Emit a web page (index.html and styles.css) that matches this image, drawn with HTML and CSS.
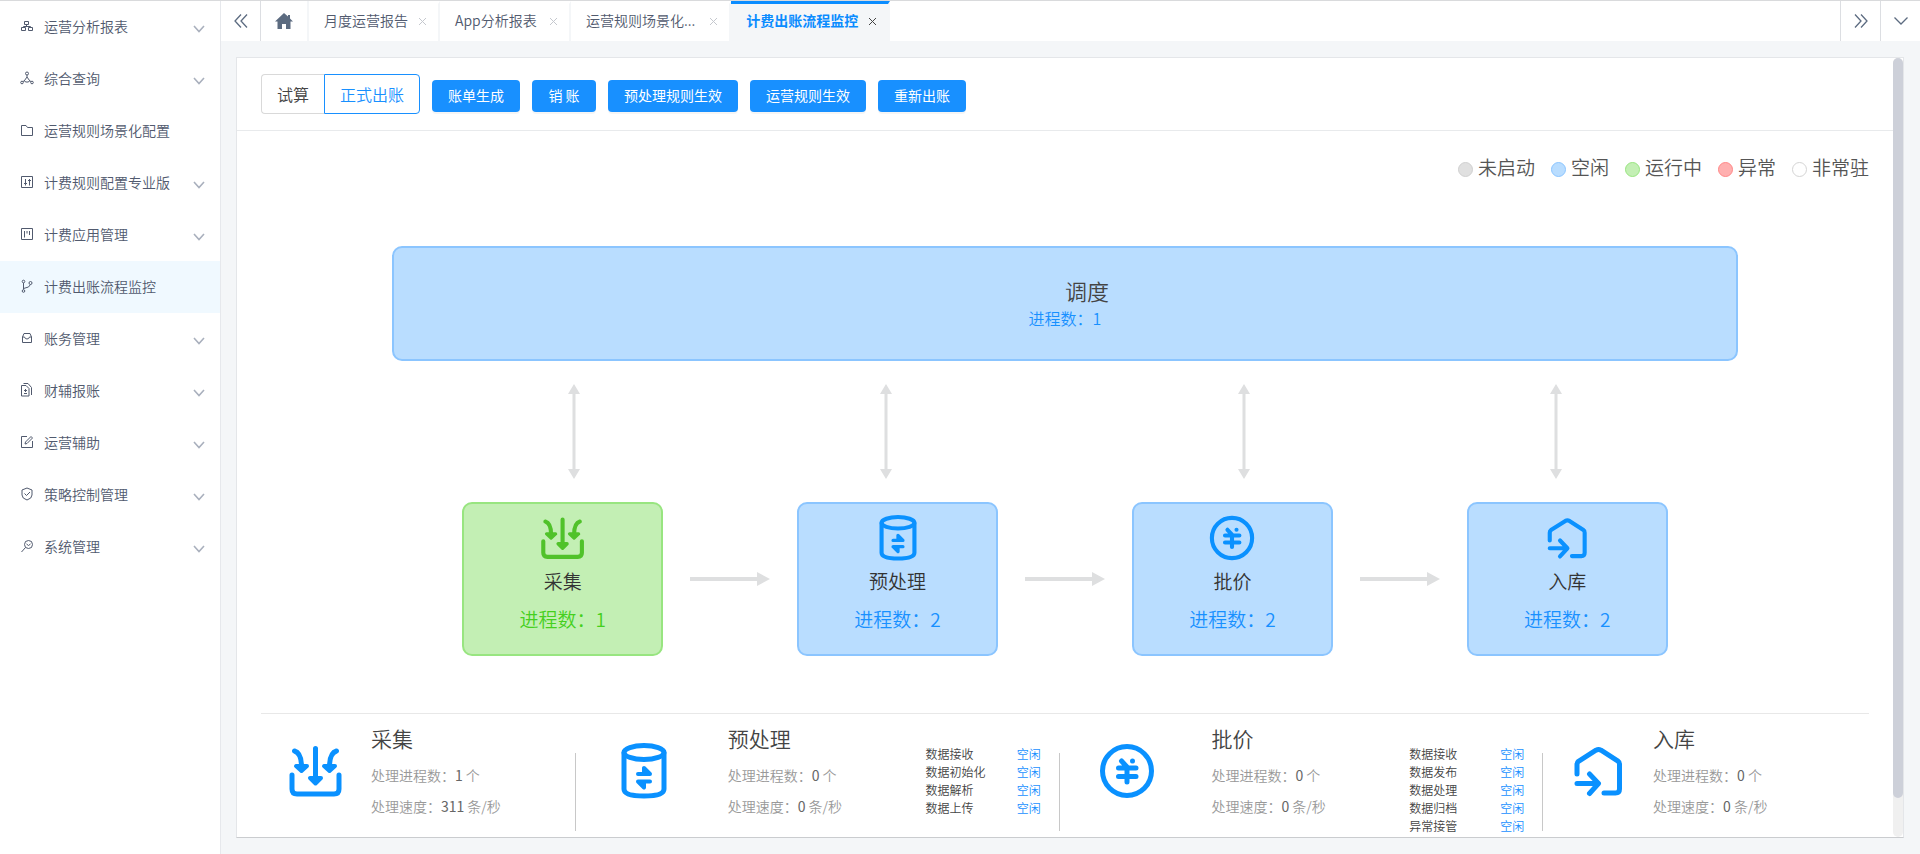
FILE: index.html
```html
<!DOCTYPE html>
<html lang="zh-CN">
<head>
<meta charset="utf-8">
<title>计费出账流程监控</title>
<link rel="stylesheet" href="styles.css">
</head>
<body>
<svg class="defs" aria-hidden="true">
  <symbol id="down" viewBox="0 0 12 8"><path stroke-width="1.6" d="M1 1l5 5.500L11 1"/></symbol>
  <symbol id="close" viewBox="0 0 9 9"><path d="M1 1l7 7M8 1L1 8"/></symbol>
  <symbol id="collect" viewBox="-1 -2 56 56">
    <path d="M3 30v14q0 5 5 5h37q5 0 5-5V30M26.500 3.500v33" class="thick"/>
    <path d="M5.500 6q7 2 7 16M47.500 6q-7 2-7 16" class="thick"/>
    <path d="M21 33h11l-5.500 5.500zM7 21h11L12.500 26zM35 21h11L40.500 26z" class="tip"/>
  </symbol>
  <symbol id="process" viewBox="0 0 46 56">
    <ellipse cx="23" cy="9.500" rx="20" ry="7" class="thick"/>
    <path d="M3 10v36q0 7 20 7t20-7V10" class="thick"/>
    <path d="M17 31h12l-6-6v6M29 38.500H17l6 6v-6" class="tip"/>
  </symbol>
  <symbol id="price" viewBox="-1 -1 56 56">
    <circle cx="27" cy="27" r="24.500" class="thick"/>
    <path d="M18.500 24H36M18.500 32.500H36M27 23v15M21.500 17L27 23M32.500 17v0" class="thick"/>
  </symbol>
  <symbol id="store" viewBox="-4 -4 56 56">
    <path d="M3 27V17.500q0-2 1.500-3.200L22 3.200q2.500-1.200 5 0l17 11q1.500 1 1.500 3.300V42q0 4-4 4H30M3 36.500h20M15.500 27l9 9.500-9 10" class="thick"/>
  </symbol>
  <symbol id="varrow" viewBox="0 0 12 95"><path d="M6 0l6 10H7.500v75H12L6 95 0 85h4.500V10H0z"/></symbol>
  <symbol id="harrow" viewBox="0 0 80 14"><path d="M0 5h67V0l13 7-13 7V9H0z"/></symbol>
</svg>
<div class="app">
  <nav class="sidebar">
    <a class="item" href="#"><svg class="ico" viewBox="0 0 14 14"><path d="M4.500 2.500h4v3h-4zM1.500 8.500h4v3h-4zM8.500 8.500h4v3h-4zM6.500 5.500v1.500M3.500 8.500v-1h7v1"/></svg><span>运营分析报表</span><svg class="chev"><use href="#down"/></svg></a>
    <a class="item" href="#"><svg class="ico" viewBox="0 0 14 14"><circle cx="7" cy="2.500" r="1.500"/><circle cx="2" cy="11.500" r="1.300"/><circle cx="12" cy="11.500" r="1.300"/><path d="M7 4v2M3 10.500l2-1M11 10.500l-2-1M7 6l2.500 3.500-1 1.500h-3l-1-1.500z"/></svg><span>综合查询</span><svg class="chev"><use href="#down"/></svg></a>
    <a class="item" href="#"><svg class="ico" viewBox="0 0 14 14"><path d="M1.500 2.500h4.500l1.500 2h5v8h-11z"/></svg><span>运营规则场景化配置</span></a>
    <a class="item" href="#"><svg class="ico" viewBox="0 0 14 14"><path d="M1.500 1.500h11v11h-11zM5.500 4v6.500M9.500 4v6.500M4 8.500h3M8 5.500h3"/></svg><span>计费规则配置专业版</span><svg class="chev"><use href="#down"/></svg></a>
    <a class="item" href="#"><svg class="ico" viewBox="0 0 14 14"><path d="M1.500 1.500h11v11h-11zM4.500 4v6.500M7 4v2.500M9.500 4v4"/></svg><span>计费应用管理</span><svg class="chev"><use href="#down"/></svg></a>
    <a class="item active" href="#"><svg class="ico" viewBox="0 0 14 14"><circle cx="3.500" cy="2.500" r="1.300"/><circle cx="3.500" cy="12" r="1.300"/><circle cx="10.500" cy="4" r="1.500"/><path d="M3.500 4v6.500M3.500 9.500q6.500-1 7-4"/></svg><span>计费出账流程监控</span></a>
    <a class="item" href="#"><svg class="ico" viewBox="0 0 14 14"><path d="M2.500 6L4 2.500h6L11.500 6v5.500h-9zM2.500 6h2q.5 2 2.500 2t2.500-2h2"/></svg><span>账务管理</span><svg class="chev"><use href="#down"/></svg></a>
    <a class="item" href="#"><svg class="ico" viewBox="0 0 14 14"><path d="M1.500 2.500H6L9 5.500V13H1.500zM3.500.5H8l3.500 4V12M5.500 6v3M4 7.500h3M4 10.500h3"/></svg><span>财辅报账</span><svg class="chev"><use href="#down"/></svg></a>
    <a class="item" href="#"><svg class="ico" viewBox="0 0 14 14"><path d="M7 1.500H1.500v11h11V6M11 1.500l1.500 1.500L7 8.500 5 9l.5-2z"/></svg><span>运营辅助</span><svg class="chev"><use href="#down"/></svg></a>
    <a class="item" href="#"><svg class="ico" viewBox="0 0 14 14"><path d="M7 1l5 2v5q0 3.500-5 5-5-1.500-5-5V3zM4.500 6.500l2 2L10 5"/></svg><span>策略控制管理</span><svg class="chev"><use href="#down"/></svg></a>
    <a class="item" href="#"><svg class="ico" viewBox="0 0 14 14"><circle cx="8.500" cy="5.500" r="4"/><path d="M5.500 8.500L1.500 13M6.500 5l2 1.500L10.500 5"/></svg><span>系统管理</span><svg class="chev"><use href="#down"/></svg></a>
  </nav>
  <div class="body">
    <header class="tabs">
      <button class="nav-btn first" aria-label="向左"><svg width="16" height="16" viewBox="0 0 16 16"><path stroke-width="1.3" d="M8 1.500L2 8l6 6.500M14 1.500L8 8l6 6.500"/></svg></button>
      <button class="home" aria-label="首页"><svg width="18" height="16" viewBox="0 0 18 16"><path d="M9 0L0 8.500h2.500V16h4.500v-5h4v5h4.500V8.500H18L15 5.500V2h-2v1.500z"/></svg></button>
      <div class="tab"><span>月度运营报告</span><button aria-label="关闭"><svg><use href="#close"/></svg></button></div>
      <div class="tab"><span>App分析报表</span><button aria-label="关闭"><svg><use href="#close"/></svg></button></div>
      <div class="tab long"><span>运营规则场景化...</span><button aria-label="关闭"><svg><use href="#close"/></svg></button></div>
      <div class="tab current"><span>计费出账流程监控</span><button aria-label="关闭"><svg><use href="#close"/></svg></button></div>
      <button class="nav-btn right" aria-label="向右"><svg width="16" height="16" viewBox="0 0 16 16"><path stroke-width="1.3" d="M2 1.500L8 8l-6 6.500M8 1.500L14 8l-6 6.500"/></svg></button>
      <button class="nav-btn" aria-label="更多"><svg width="16" height="16" viewBox="0 0 16 16"><path stroke-width="1.3" d="M1.500 4.500L8 11l6.500-6.500"/></svg></button>
    </header>
    <main class="card">
      <div class="content">
        <div class="toolbar">
          <div class="seg"><button>试算</button><button class="on">正式出账</button></div>
          <button class="btn">账单生成</button>
          <button class="btn">销 账</button>
          <button class="btn">预处理规则生效</button>
          <button class="btn">运营规则生效</button>
          <button class="btn">重新出账</button>
        </div>
        <ul class="legend">
          <li><i class="dot off"></i>未启动</li>
          <li><i class="dot idle"></i>空闲</li>
          <li><i class="dot run"></i>运行中</li>
          <li><i class="dot err"></i>异常</li>
          <li><i class="dot none"></i>非常驻</li>
        </ul>
        <section class="dispatch"><h2>调度</h2><p>进程数：1</p></section>
        <div class="links">
          <div class="pair"><svg><use href="#varrow"/></svg><svg><use href="#varrow"/></svg></div>
          <div class="pair"><svg><use href="#varrow"/></svg><svg><use href="#varrow"/></svg></div>
        </div>
        <div class="steps">
          <section class="step running"><svg class="glyph"><use href="#collect"/></svg><h3>采集</h3><p>进程数：1</p></section>
          <svg class="next"><use href="#harrow"/></svg>
          <section class="step"><svg class="glyph"><use href="#process"/></svg><h3>预处理</h3><p>进程数：2</p></section>
          <svg class="next"><use href="#harrow"/></svg>
          <section class="step"><svg class="glyph"><use href="#price"/></svg><h3>批价</h3><p>进程数：2</p></section>
          <svg class="next"><use href="#harrow"/></svg>
          <section class="step"><svg class="glyph"><use href="#store"/></svg><h3>入库</h3><p>进程数：2</p></section>
        </div>
        <div class="stats">
          <section class="stat">
            <svg class="big"><use href="#collect"/></svg>
            <div class="info"><h3>采集</h3><p>处理进程数：<b>1</b> 个</p><p>处理速度：<b>311</b> 条/秒</p></div>
          </section>
          <section class="stat wide">
            <svg class="big"><use href="#process"/></svg>
            <div class="info"><h3>预处理</h3><p>处理进程数：<b>0</b> 个</p><p>处理速度：<b>0</b> 条/秒</p></div>
            <table>
              <tr><td>数据接收</td><td><a href="#">空闲</a></td></tr>
              <tr><td>数据初始化</td><td><a href="#">空闲</a></td></tr>
              <tr><td>数据解析</td><td><a href="#">空闲</a></td></tr>
              <tr><td>数据上传</td><td><a href="#">空闲</a></td></tr>
            </table>
          </section>
          <section class="stat wide">
            <svg class="big"><use href="#price"/></svg>
            <div class="info"><h3>批价</h3><p>处理进程数：<b>0</b> 个</p><p>处理速度：<b>0</b> 条/秒</p></div>
            <table>
              <tr><td>数据接收</td><td><a href="#">空闲</a></td></tr>
              <tr><td>数据发布</td><td><a href="#">空闲</a></td></tr>
              <tr><td>数据处理</td><td><a href="#">空闲</a></td></tr>
              <tr><td>数据归档</td><td><a href="#">空闲</a></td></tr>
              <tr><td>异常接管</td><td><a href="#">空闲</a></td></tr>
            </table>
          </section>
          <section class="stat">
            <svg class="big"><use href="#store"/></svg>
            <div class="info"><h3>入库</h3><p>处理进程数：<b>0</b> 个</p><p>处理速度：<b>0</b> 条/秒</p></div>
          </section>
        </div>
      </div>
      <div class="scroll"><div class="thumb"></div></div>
    </main>
  </div>
</div>
</body>
</html>
```
FILE: styles.css
```css
* { box-sizing: border-box; }
body {
  margin: 0;
  background: #f4f6f8;
  color: #515a6e;
  font: 350 14px/20px "Noto Sans CJK SC", sans-serif;
}
h2, h3, p, ul { margin: 0; padding: 0; font-weight: 350; }
button { margin: 0; padding: 0; border: 0; background: none; color: inherit; font: inherit; cursor: pointer; }
a { color: inherit; text-decoration: none; }
svg { fill: none; flex: none; }
.defs { position: absolute; width: 0; height: 0; }

.app { display: flex; min-height: 100vh; border-top: 1px solid #d9dadc; }

.sidebar { flex: none; width: 221px; background: #fff; border-right: 1px solid #e6e8ec; }
.item { display: flex; align-items: center; height: 52px; padding: 0 15px 2px 20px; gap: 10px; }
.item.active { background: #f0f9ff; }
.ico { width: 14px; height: 14px; stroke: #515a6e; }
.chev { width: 12px; height: 8px; margin: 5px 0 0 auto; stroke: #a9b0bd; }

.body { flex: 1; min-width: 0; display: flex; flex-direction: column; }
.tabs { display: flex; height: 40px; background: #fff; }
.nav-btn { display: flex; align-items: center; justify-content: center; width: 40px; border-left: 1px solid #dcdee2; }
.nav-btn.first { border-left: 0; border-right: 1px solid #dcdee2; }
.nav-btn.right { margin-left: auto; }
.nav-btn svg { stroke: #5c6b80; }
.home { display: flex; align-items: center; justify-content: center; width: 48px; border-right: 2px solid #f4f6f8; }
.home svg { fill: #5c6b80; }
.tab { display: flex; align-items: center; gap: 10px; min-width: 131px; padding: 0 11px 6px 15px; border-top: 3px solid transparent; border-right: 2px solid #f4f6f8; }
.tab button { display: flex; margin: 4px 0 0 auto; }
.tab svg { width: 9px; height: 9px; stroke: #c5c8ce; }
.tab.long { gap: 14px; }
.tab.current { background: #f4f6f8; border-top-color: #0a8cff; color: #0a8cff; font-weight: 700; }
.tab.current svg { stroke: #444; }

.card { display: flex; flex: 1; margin: 16px 16px 16px 15px; background: #fff; border: 1px solid #e4e6e9; border-bottom-color: #cacccf; overflow: hidden; }
.content { flex: 1; min-width: 0; }
.scroll { width: 10px; border-radius: 5px; background: #f0f0f0; }
.thumb { height: 95%; border-radius: 5px; background: #cdd0d9; }

.toolbar { display: flex; align-items: center; gap: 12px; height: 73px; padding: 0 24px; border-bottom: 1px solid #e8eaec; }
.seg { display: flex; }
.seg button { height: 40px; padding: 0 15px; border: 1px solid #d9d9d9; border-radius: 4px 0 0 4px; border-right: 0; font-size: 16px; color: #444; }
.seg .on { border: 1px solid #1890ff; border-radius: 0 4px 4px 0; color: #1890ff; }
.btn { min-width: 64px; height: 32px; margin-top: 4px; padding: 0 16px 2px; border-radius: 4px; background: #1890ff; color: #fff; font-weight: 400; box-shadow: 0 2px 0 rgba(0, 0, 0, .04); }

.legend { display: flex; justify-content: flex-end; gap: 16px; padding: 22px 24px 0; list-style: none; font-size: 19px; line-height: 28px; color: #555; }
.legend li { display: flex; align-items: center; gap: 5px; }
.dot { width: 15px; height: 15px; margin-top: 4px; border: 1px solid; border-radius: 50%; }
.off { background: #e0e0e0; border-color: #d0d0d0; }
.idle { background: #b9ddff; border-color: #8bc5ff; }
.run { background: #c3efb4; border-color: #98e580; }
.err { background: #ffb0b0; border-color: #ff8888; }
.none { background: #fff; border-color: #d4d4d4; }

.dispatch { width: 81.3%; height: 115px; margin: 65px auto 0; padding: 26px 0; border: 2px solid #8bc5ff; border-radius: 10px; background: #b9ddff; text-align: center; }
.dispatch h2 { padding-left: 44px; font-size: 22px; line-height: 32px; color: #444; }
.dispatch p { font-size: 16px; line-height: 24px; color: #1890ff; }

.links { display: flex; justify-content: space-between; width: 60%; margin: 23px auto; }
.pair { display: flex; justify-content: space-between; width: 32.6%; }
.pair svg { width: 12px; height: 95px; fill: #dedfe0; }

.steps { display: grid; grid-template-columns: 3fr 2fr 3fr 2fr 3fr 2fr 3fr; align-items: center; width: 72.8%; margin: 0 auto; }
.step { display: flex; flex-direction: column; align-items: center; height: 154px; padding-top: 11px; border: 2px solid #8bc5ff; border-radius: 10px; background: #b9ddff; color: #1890ff; }
.step.running { border-color: #98e580; background: #c3efb4; color: #45d01e; }
.step h3 { margin-top: 6px; font-size: 19px; line-height: 28px; color: #333; }
.step p { margin-top: 10px; font-size: 19px; line-height: 28px; }
.glyph { width: 46px; height: 46px; color: #0a91ff; }
.running .glyph { color: #50c22a; }
.glyph, .big { stroke: currentColor; stroke-linecap: round; stroke-linejoin: round; }
.thick { stroke-width: 5; }
.tip { fill: currentColor; stroke-width: 4; }
.next { width: 80px; height: 14px; justify-self: center; fill: #dedfe0; }

.stats { display: grid; grid-template-columns: 315fr 484fr 484fr 326fr; height: 124px; margin: 57px 24px 0; border-top: 1px solid #e8e8e8; }
.stat { display: grid; grid-template-columns: 110fr 205fr; background: linear-gradient(#c8c8c8, #c8c8c8) right 39px / 1px 78px no-repeat; }
.stat:last-child { grid-template-columns: 110fr 216fr; background: none; }
.stat.wide { grid-template-columns: 152fr 198fr 134fr; }
.big { width: 56px; height: 56px; margin-top: 29px; justify-self: center; color: #0a91ff; }
.wide .big { margin-right: 16px; }
.info { padding-top: 10px; color: #999; white-space: nowrap; }
.info h3 { margin-bottom: 13px; font-size: 21px; line-height: 28px; color: #444; }
.info p { margin-bottom: 11px; }
.info b { font-weight: 400; color: #666; }
.stat table { width: 100%; margin-top: 31px; align-self: start; border-collapse: collapse; table-layout: fixed; font-size: 12px; line-height: 18px; color: #444; }
.stat td { padding: 0; }
.stat td:first-child { width: 68%; }
.stat td a { color: #1890ff; }
```
